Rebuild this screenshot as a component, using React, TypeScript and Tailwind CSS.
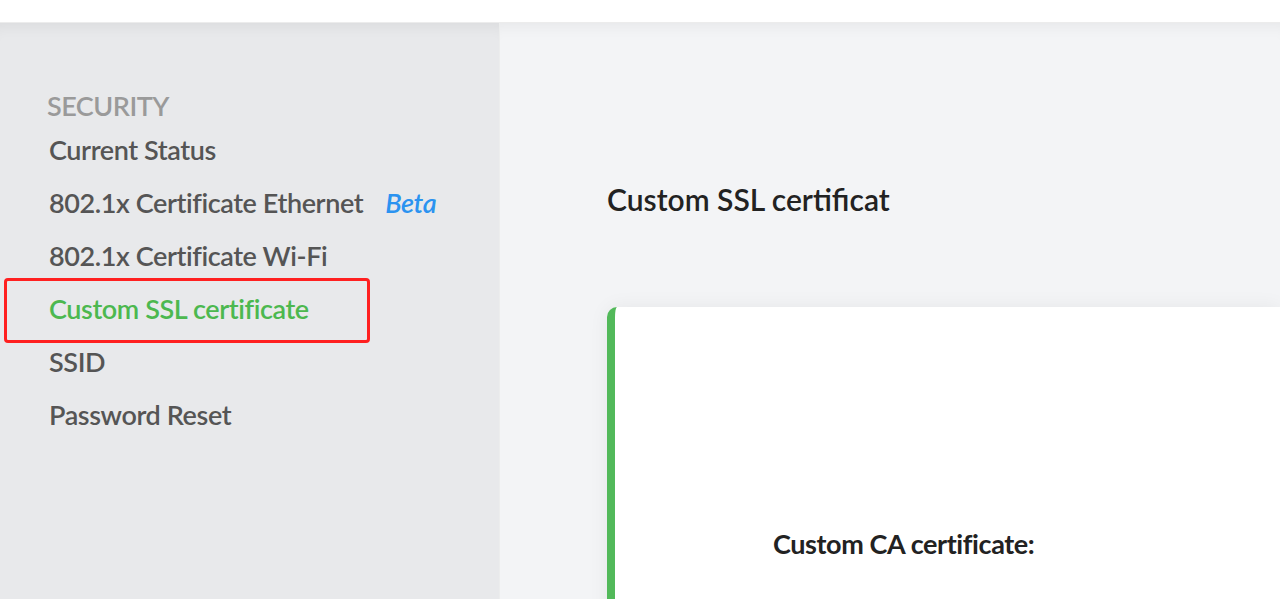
import React from "react";

const items = [
  { label: "Current Status" },
  { label: "802.1x Certificate Ethernet", beta: true },
  { label: "802.1x Certificate Wi-Fi" },
  { label: "Custom SSL certificate", active: true },
  { label: "SSID" },
  { label: "Password Reset" },
];

export default function App() {
  return (
    <div
      className="w-[1280px] h-[599px] overflow-hidden flex flex-col bg-white"
      style={{ fontFamily: "Lato, 'Open Sans', sans-serif" }}
    >
      <div className="h-[23px] shrink-0 bg-white border-b border-[#ececec]" />
      <div className="flex flex-1 min-h-0">
        <aside className="relative w-[500px] shrink-0 bg-[#e8e9eb] border-r border-[#eceded] shadow-[inset_0_14px_14px_-10px_rgba(0,0,0,0.06)]">
          <div className="pt-[67px] pl-[47px]">
            <div className="text-[27px] leading-[32px] font-semibold text-[#9a9a9a] tracking-[-0.5px]">SECURITY</div>
            <ul className="mt-[12px] pl-[2px] flex flex-col gap-[21px]">
              {items.map((it) => (
                <li key={it.label} className="relative flex items-center h-[32px] text-[27px] leading-[32px] font-semibold tracking-[-0.4px]">
                  {it.active && (
                    <span className="absolute left-[-45px] top-[-15px] w-[366px] h-[65px] border-[3px] border-[#ff2020] rounded-[4px]" />
                  )}
                  <span className={it.active ? "text-[#4cb84f]" : "text-[#555555]"}>{it.label}</span>
                  {it.beta && <span className="ml-[22px] italic text-[#2b93f0]">Beta</span>}
                </li>
              ))}
            </ul>
          </div>
        </aside>
        <main className="flex-1 min-w-0 bg-[#f3f4f6] shadow-[inset_0_14px_14px_-10px_rgba(0,0,0,0.05)] pl-[107px] pt-[158px]">
          <h1 className="text-[30px] leading-[36px] font-semibold text-[#222222]">Custom SSL certificat</h1>
          <div className="mt-[90px] h-[400px] bg-white rounded-tl-[10px] border-l-[8px] border-[#52b95a] shadow-[0_0_20px_rgba(0,0,0,0.06)] pl-[158px] pt-[221px]">
            <div className="text-[27px] leading-[32px] font-bold text-[#222222] tracking-[-0.4px]">Custom CA certificate:</div>
          </div>
        </main>
      </div>
    </div>
  );
}
